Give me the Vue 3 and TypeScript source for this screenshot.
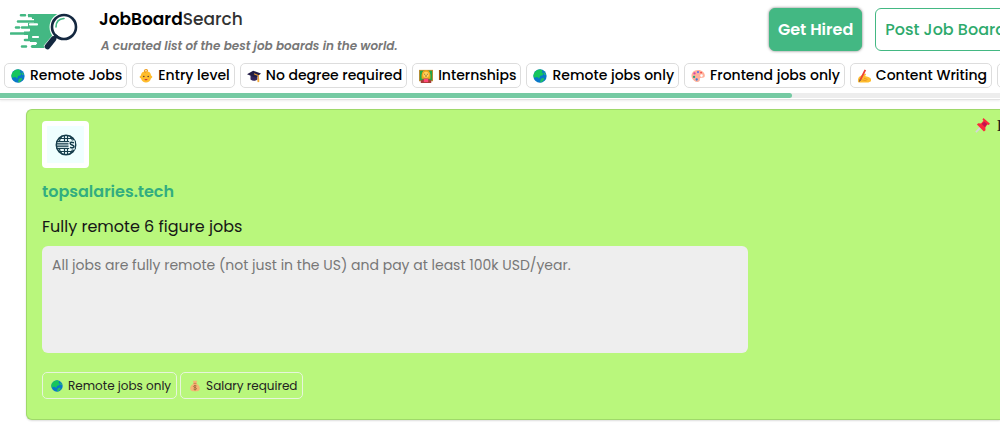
<script setup lang="ts">
import { ref } from 'vue'

type IconName = 'globe' | 'baby' | 'cap' | 'teacher' | 'palette' | 'write' | 'money'
interface Tag { icon: IconName; label: string }

const filters: Tag[] = [
  { icon: 'globe', label: 'Remote Jobs' },
  { icon: 'baby', label: 'Entry level' },
  { icon: 'cap', label: 'No degree required' },
  { icon: 'teacher', label: 'Internships' },
  { icon: 'globe', label: 'Remote jobs only' },
  { icon: 'palette', label: 'Frontend jobs only' },
  { icon: 'write', label: 'Content Writing' },
  { icon: 'money', label: 'Salary required' },
]
const tags: Tag[] = [
  { icon: 'globe', label: 'Remote jobs only' },
  { icon: 'money', label: 'Salary required' },
]
const scrolled = ref(79.2)
const description = ref('All jobs are fully remote (not just in the US) and pay at least 100k USD/year.')
</script>

<template>
  <svg class="symbols" aria-hidden="true">
    <symbol id="globe" viewBox="0 0 16 16">
      <circle cx="8" cy="8" r="7.600" fill="#0878c9" />
      <path d="M1 5Q4 0 9 .6L11 2l-1 2 2 1-1 2-3 1-1 3-2-2-4 1Q0 7 1 5Z" fill="#16c65c" />
      <path d="M9 11l3-1 1 2-3 3-2 0Z" fill="#21bd64" />
      <path d="M12 3l3 3-2 1Z" fill="#27bf70" />
    </symbol>
    <symbol id="baby" viewBox="0 0 16 16">
      <path d="M8 2.500c4 0 5.700 2.500 5.700 5 2 .2 2 3 0 3.300C13 14 10.500 15.500 8 15.500S3 14 2.300 10.800C.2 10.500.2 7.700 2.300 7.500 2.300 5 4 2.500 8 2.500Z" fill="#ffbd2d" />
      <path d="M8 4C5 3 6 .7 8 .7s2.500 2 .6 2.200" fill="none" stroke="#ee9e20" stroke-width="1.200" />
      <circle cx="5.500" cy="8.500" r=".9" fill="#553b35" /><circle cx="10.500" cy="8.500" r=".9" fill="#553b35" />
      <path d="M6 11.500h4q-2 3-4 0" fill="#cf3b3c" />
    </symbol>
    <symbol id="cap" viewBox="0 0 16 16">
      <path d="M4 7v5q4 3 8 0V7" fill="#32245c" />
      <path d="M0 6l7-4 9 3-6 5Z" fill="#211b45" />
      <path d="M8 5.500l5 2V14" fill="none" stroke="#e79a34" stroke-width="1.300" />
      <path d="M12 11h2v4h-2Z" fill="#f4aa35" />
    </symbol>
    <symbol id="teacher" viewBox="0 0 16 16">
      <path d="M0 1h16v13H0Z" fill="#c58a32" /><path d="M1 2h14v11H1Z" fill="#23a548" />
      <path d="M3 11Q2 1 8 1t5 10Z" fill="#f0a51f" />
      <circle cx="8" cy="6.500" r="3.300" fill="#ffd35b" />
      <path d="M2 16v-3l4-2h4l4 2v3Z" fill="#a53f38" /><path d="M5.500 11h5v4h-5Z" fill="#ff4777" />
      <path d="M6 6h1m2 0h1M7 8h2" stroke="#704932" />
    </symbol>
    <symbol id="palette" viewBox="0 0 16 16">
      <path d="M8 1C2 1-.5 6 1 10c1.500 4 6 6 8.500 4 1.500-1.200-.2-2.600 1-3.600 1.400-1 5 .8 5.300-2.700C16 4 12.500 1 8 1Zm4 5a1.500 1.500 0 1 1 0 3 1.500 1.500 0 0 1 0-3Z" fill="#ffb09a" fill-rule="evenodd" />
      <circle cx="4" cy="5" r="1.300" fill="#d943a7" /><circle cx="8" cy="3.500" r="1.300" fill="#6a72e7" />
      <circle cx="3.500" cy="9" r="1.300" fill="#28a476" /><circle cx="6.500" cy="12" r="1.300" fill="#367be1" />
      <circle cx="11.500" cy="4" r="1" fill="#ef4545" />
    </symbol>
    <symbol id="write" viewBox="0 0 16 16">
      <path d="M1 14Q1 9 4 8l5-3q2 0 1 2l-1 1 4 1q3 1 3 3v2l-3 1.500H3Q1 15.500 1 14Z" fill="#ffbd2e" />
      <path d="M8 10.500l4 1.500M6 12.500l5 1" fill="none" stroke="#e38d20" stroke-width=".8" />
      <path d="M9.500 1L4 12" stroke="#ee4035" stroke-width="2" /><path d="M3 11.500l2 1-3 2.500Z" fill="#76504b" />
    </symbol>
    <symbol id="money" viewBox="0 0 16 16">
      <path d="M5 1h6L9.500 5C14 7 15 10 14 13q-1 2-6 2t-6-2C1 10 2 7 6.500 5Z" fill="#f5b575" />
      <path d="M6 4.500h4" stroke="#d67c50" stroke-width="1.300" />
      <path d="M10 8q-4-1.500-4 .5c0 2 4 1 4 3 0 1.500-2 1.500-4 .5M8 6.500V14" fill="none" stroke="#9b6535" stroke-width="1.100" />
    </symbol>
  </svg>

  <header class="top">
    <div class="masthead">
      <a class="logo" href="#" aria-label="JobBoardSearch home">
        <svg viewBox="0 0 68 38" aria-hidden="true">
          <path d="M18 1H48Q38 10 43 22L34 35H22V32H26V29H20V26H18V22H14V18H20V14H18V10H24V6H18Z" fill="#43b883" />
          <g fill="none" stroke="#43b883" stroke-width="2.600" stroke-linecap="round">
            <path d="M11 2.300h4M19 2.300h9M8 8.500h18M12 14.500h1M6 14.500h3M14 14.500h10M1 20.500h20M15 27h13M12 33.500h4M22 33.500h9" />
          </g>
          <g fill="none" stroke="#fff" stroke-width="2.200" stroke-linecap="round">
            <path d="M16 5.400h5M20 11.400h7M10 17.400h9M23 24h5M19 30.300h7" />
          </g>
          <circle cx="54" cy="14" r="14.500" fill="#fff" />
          <path d="M47 24L37 36" stroke="#fff" stroke-width="9" />
          <circle cx="54" cy="14" r="12" fill="#fff" stroke="#142840" stroke-width="2.600" />
          <path d="M46 14Q46 6 54 5.500" fill="none" stroke="#43b883" stroke-width="1.600" stroke-linecap="round" />
          <path d="M47 22l-3 4" stroke="#142840" stroke-width="3" />
          <path d="M43.500 26l-6 7.500" stroke="#142840" stroke-width="5.600" stroke-linecap="round" />
        </svg>
      </a>
      <div class="brand">
        <h1><b>JobBoard</b>Search</h1>
        <p>A curated list of the best job boards in the world.</p>
      </div>
      <div class="actions">
        <button class="hire" type="button">Get Hired</button>
        <button class="post" type="button">Post Job Board</button>
      </div>
    </div>
    <nav class="filters" aria-label="Job filters">
      <a v-for="(f, i) in filters" :key="i" class="filter" href="#">
        <svg aria-hidden="true"><use :href="'#' + f.icon" /></svg>{{ f.label }}
      </a>
    </nav>
    <div class="track"><div class="thumb" :style="{ width: scrolled + '%' }"></div></div>
  </header>

  <main>
    <article class="card">
      <div class="card-head">
        <a class="site-logo" href="#" aria-label="topsalaries.tech">
          <svg viewBox="0 0 22 22" aria-hidden="true">
            <g fill="none" stroke="#173f4d" stroke-width="1.200">
              <circle cx="11" cy="11" r="9.700" stroke-width="1.500" />
              <path d="M9.500 1v6M12.500 1v6M9.500 15v6M12.500 15v6M7 2Q4.500 5 4.500 7M15 2Q17.500 5 17.500 7M7 20Q4.500 17 4.500 15M15 20Q17.500 17 17.500 15M4 4.500h14M4 17.500h14" />
              <path d="M1.500 7.500h19M1.500 14.500h19" />
              <path d="M1.500 9.300h12M1.500 11h12M1.500 12.700h12" stroke-width="1" />
            </g>
            <path d="M14.200 6.500h5.600v9h-5.600Z" fill="#efffff" />
            <path d="M19 8.700q-3.800-1.200-3.800.6c0 2 3.800 1.200 3.800 3.200 0 1.700-2.300 1.600-3.900.7" fill="none" stroke="#173f4d" stroke-width="1.600" />
          </svg>
        </a>
        <div class="pinned">
          <svg viewBox="0 0 16 16" aria-hidden="true">
            <path d="M1 15l6-6" stroke="#d5d5dc" stroke-width="1.800" />
            <path d="M9 0l7 6-1.500 1.500-1.500-.5-2 3 .2 3-1.700 1.500L2 7l1.500-1.500 3 .3 2.500-2.800L8 1.500Z" fill="#fa2b3c" />
            <path d="M7 6l3.500 3.500 2.500-3L10 4Z" fill="#c5134e" />
          </svg>
          <span>Pinned</span>
        </div>
      </div>
      <h2><a href="#">topsalaries.tech</a></h2>
      <label for="about">Fully remote 6 figure jobs</label>
      <textarea id="about" v-model="description" readonly></textarea>
      <div class="tags">
        <a v-for="t in tags" :key="t.label" class="tag" href="#">
          <svg aria-hidden="true"><use :href="'#' + t.icon" /></svg>{{ t.label }}
        </a>
      </div>
    </article>
  </main>
</template>

<style>
body {
  margin: 0;
  background: #fff;
  overflow-x: hidden;
}
</style>

<style scoped>
* { box-sizing: border-box; }
.symbols { position: absolute; width: 0; height: 0; }
a { color: inherit; text-decoration: none; }
.top, main { font-family: Poppins, Inter, "Noto Sans", sans-serif; overflow: hidden; }
.top {
  border-bottom: 1px solid #e2e2e2;
  padding-bottom: 1px;
  box-shadow: 0 1px 2px #eee;
}
.masthead { display: flex; height: 63px; padding: 8px 0 0 10px; }
.logo { width: 68px; height: 38px; margin-top: 5px; flex: none; }
.logo svg { display: block; width: 100%; height: 100%; }
.brand { margin-left: 21px; white-space: nowrap; }
h1 { margin: 0; font-size: 17px; line-height: 22px; font-weight: 500; color: #333; }
h1 b { font-weight: 600; color: #000; }
.brand p { margin: 6px 0 0 2px; font-size: 12px; line-height: 20px; font-style: italic; font-weight: 600; color: #777; }
.actions { display: flex; gap: 13px; margin: 0 -16px 0 auto; }
.actions button {
  height: 43px;
  padding: 0 9px;
  border: 1px solid #43b883;
  border-radius: 6px;
  font: 600 16px Poppins, Inter, sans-serif;
  white-space: nowrap;
}
.actions .hire { padding: 0 8px; background: #43b883; color: #fff; box-shadow: 0 0 3px #777; }
.actions .post { background: #fff; color: #2eaa6c; font-weight: 500; }
.filters { display: flex; gap: 5px; padding-left: 4px; overflow: hidden; }
.filter {
  display: flex;
  flex: none;
  align-items: center;
  gap: 5px;
  height: 25px;
  padding: 0 4px 0 6px;
  border: 1px solid #ddd;
  border-radius: 5px;
  font-size: 14px;
  font-weight: 500;
  color: #000;
  white-space: nowrap;
}
.filter svg { width: 14px; height: 14px; }
.track { height: 5px; margin-top: 5px; background: #ededed; }
.thumb { height: 5px; border-radius: 0 3px 3px 0; background: #75caa3; }
main { padding: 9px 0 5px 26px; }
.card {
  padding: 11px 0 20px 15px;
  border: 1px solid #9fd96a;
  border-right: 0;
  border-radius: 6px 0 0 6px;
  background: #b9f77c;
  box-shadow: 0 1px 2px #ddd;
}
.card-head { display: flex; justify-content: space-between; }
.site-logo {
  display: grid;
  place-items: center;
  width: 47px;
  height: 47px;
  border: 5px solid #fff;
  border-radius: 4px;
  background: #efffff;
}
.site-logo svg { width: 22px; height: 22px; }
.pinned {
  display: flex;
  gap: 7px;
  width: 25px;
  height: 16px;
  margin-top: -3px;
  overflow: hidden;
  font: 700 16px/16px "Liberation Serif", serif;
  color: #222;
}
.pinned svg { flex: none; width: 15px; height: 15px; }
h2 { margin: 13px 0 0; font-size: 16px; line-height: 22px; font-weight: 600; color: #32ad80; }
label { display: block; margin-top: 12px; font-size: 16px; line-height: 24px; color: #161616; }
textarea {
  display: block;
  width: 73.7%;
  height: 107px;
  margin-top: 7px;
  padding: 9px 10px;
  border: 0;
  border-radius: 6px;
  background: #eee;
  color: #777;
  font: 14px/21px Poppins, Inter, sans-serif;
  resize: none;
}
.tags { display: flex; gap: 3px; margin-top: 19px; }
.tag {
  display: flex;
  align-items: center;
  gap: 5px;
  height: 27px;
  padding: 0 5px 0 8px;
  border: 1px solid #e7f5dc;
  border-radius: 5px;
  color: #222;
  font-size: 12px;
}
.tag svg { width: 12px; height: 12px; }
</style>
